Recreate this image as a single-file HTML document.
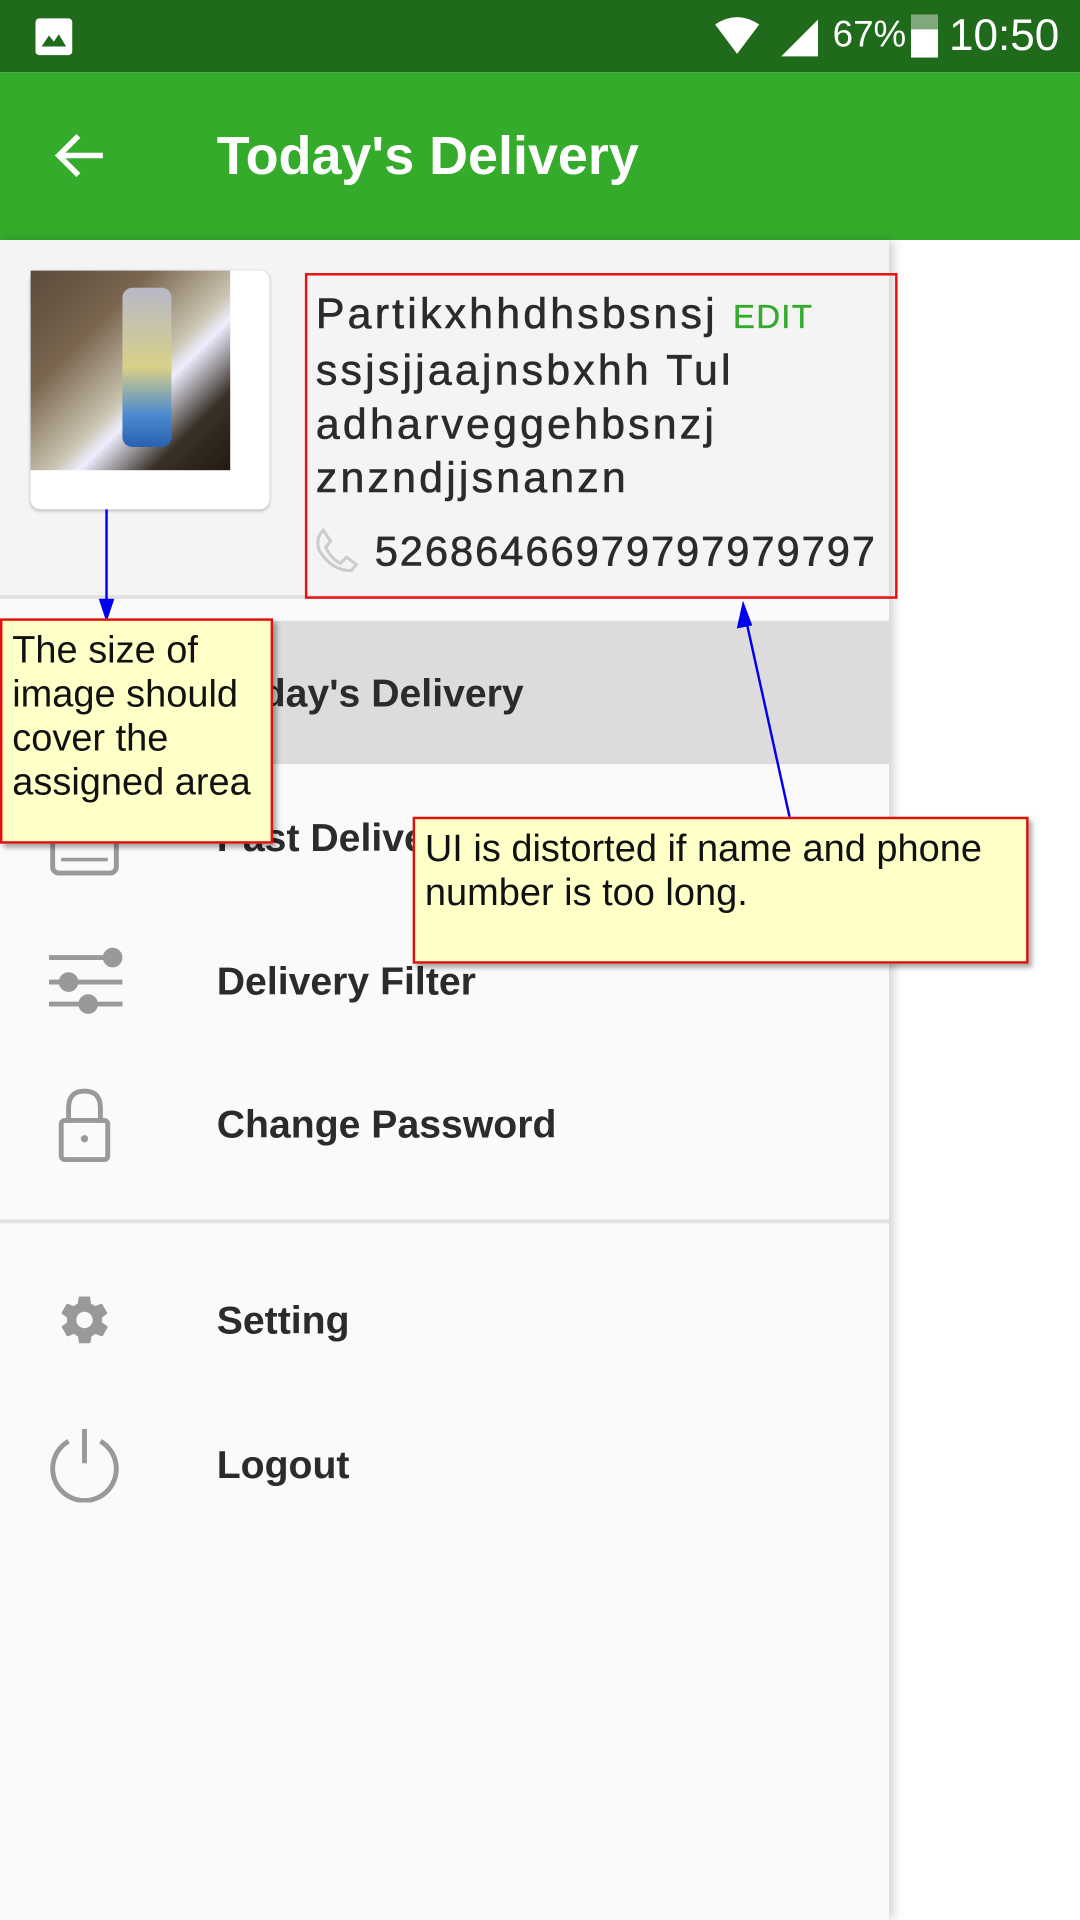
<!DOCTYPE html>
<html><head><meta charset="utf-8"><style>
html,body{margin:0;padding:0;width:1080px;height:1920px;overflow:hidden;background:#fff;font-family:"Liberation Sans",sans-serif}
#w{position:absolute;left:0;top:0;width:882px;height:1568px;transform:scale(1.22449);transform-origin:0 0;background:#fff}
.a{position:absolute}
.menu{position:absolute;left:177px;font-size:32px;font-weight:bold;color:#2b2b2b}
.note{position:absolute;background:#ffffc8;border:2px solid #e01010;box-shadow:3px 3px 4px rgba(0,0,0,.35);font-size:31px;color:#111;line-height:36px;padding:6px 8px;box-sizing:border-box}
</style></head><body><div id="w">
<div class="a" style="left:0;top:0;width:882px;height:59px;background:#1f6a1b"></div>
<svg class="a" style="left:28px;top:14px" width="32" height="32"><rect x="1" y="1" width="30" height="30" rx="3" fill="#fff"/><path d="M6 24 L12 15 L16 20 L20 14 L26 24Z" fill="#1f6a1b"/></svg>
<svg class="a" style="left:580px;top:10px" width="90" height="40"><path d="M4 10 Q22 -2 40 10 L22 34Z" fill="#fff"/><path d="M58 36 L88 6 L88 36Z" fill="#fff"/></svg>
<div class="a" style="left:680px;top:12px;font-size:30px;color:#fff">67%</div>
<div class="a" style="left:744px;top:12px;width:22px;height:35px;background:#fff"></div>
<div class="a" style="left:744px;top:12px;width:22px;height:12px;background:#7fa87c"></div>
<div class="a" style="left:775px;top:8px;font-size:36px;color:#fff">10:50</div>
<div class="a" style="left:0;top:59px;width:882px;height:137px;background:#35ab2b"></div>
<svg class="a" style="left:44px;top:106px" width="46" height="42"><path d="M40 21 H6 M20 5 L4 21 L20 37" stroke="#fff" stroke-width="4.5" fill="none"/></svg>
<div class="a" style="left:177px;top:103px;font-size:44px;font-weight:bold;color:#fff">Today's Delivery</div>
<div class="a" style="left:0;top:196px;width:726px;height:1372px;background:#fafafa;box-shadow:4px 0 8px rgba(0,0,0,.18)"></div>
<div class="a" style="left:0;top:196px;width:726px;height:292px;background:#f4f4f4"></div>
<div class="a" style="left:0;top:486px;width:726px;height:3px;background:#e2e2e2"></div>
<div class="a" style="left:25px;top:221px;width:195px;height:195px;background:#fff;border-radius:8px;box-shadow:0 1px 3px rgba(0,0,0,.25)"></div>
<div class="a" style="left:25px;top:221px;width:163px;height:163px;background:linear-gradient(135deg,#5a4a3a 0%,#7a6650 30%,#c9c3b0 55%,#eef 62%,#3a3228 80%,#221a12 100%)"></div>
<div class="a" style="left:100px;top:235px;width:40px;height:130px;background:linear-gradient(180deg,#b8b8c8,#d8d088 50%,#4a8ad0 80%,#2a60b0);border-radius:8px"></div>
<div class="a" style="left:249px;top:223px;width:484px;height:266px;border:2px solid #e81010;box-sizing:border-box"></div>
<div class="a" style="left:258px;top:235px;font-size:35px;line-height:44px;color:#2b2b2b;width:470px;letter-spacing:2.6px;-webkit-text-stroke:0.5px #2b2b2b">Partikxhhdhsbsnsj <span style="font-size:27px;color:#35ab2b;letter-spacing:1px;-webkit-text-stroke:0.3px #35ab2b">EDIT</span><br>ssjsjjaajnsbxhh Tul<br>adharveggehbsnzj<br>znzndjjsnanzn</div>
<svg class="a" style="left:256px;top:430px" width="38" height="38"><path d="M8 3 L14 12 L10 17 Q15 27 22 30 L27 25 L35 31 L31 36 Q15 36 5 20 Q1 10 8 3Z" fill="none" stroke="#ccc" stroke-width="2.5"/></svg>
<div class="a" style="left:306px;top:432px;width:407px;overflow:hidden;white-space:nowrap;font-size:34px;letter-spacing:1.6px;color:#2b2b2b;-webkit-text-stroke:0.5px #2b2b2b">52686466979797979797</div>
<div class="a" style="left:0;top:507px;width:726px;height:117px;background:#dcdcdc"></div>
<div class="menu" style="top:548px">Today's Delivery</div>
<svg class="a" style="left:40px;top:670px" width="58" height="46"><rect x="3" y="3" width="52" height="40" rx="5" fill="none" stroke="#999" stroke-width="4"/><path d="M10 32 H48" stroke="#999" stroke-width="3"/></svg>
<div class="menu" style="top:666px">Past Delivery</div>
<svg class="a" style="left:38px;top:770px" width="64" height="64"><g stroke="#999" stroke-width="4" fill="#999"><path d="M2 12 H56 M2 32 H62 M2 50 H62"/><circle cx="54" cy="12" r="6"/><circle cx="18" cy="32" r="6"/><circle cx="34" cy="50" r="6"/></g></svg>
<div class="menu" style="top:783px">Delivery Filter</div>
<svg class="a" style="left:46px;top:887px" width="46" height="64"><path d="M10 30 V18 Q10 4 23 4 Q36 4 36 18 V30" fill="none" stroke="#999" stroke-width="4"/><rect x="4" y="28" width="38" height="32" rx="3" fill="none" stroke="#999" stroke-width="4"/><circle cx="23" cy="43" r="3" fill="#999"/></svg>
<div class="menu" style="top:900px">Change Password</div>
<div class="a" style="left:0;top:996px;width:726px;height:3px;background:#e0e0e0"></div>
<svg class="a" style="left:46px;top:1055px" width="46" height="46" viewBox="0 0 24 24"><path fill="#999" d="M19.4 13c.04-.3.1-.7.1-1s-.03-.7-.1-1l2.1-1.6c.2-.15.25-.4.1-.6l-2-3.5c-.1-.2-.4-.3-.6-.2l-2.5 1c-.5-.4-1.1-.7-1.700-1l-.4-2.6C14.5 2.2 14.2 2 14 2h-4c-.25 0-.45.2-.5.4l-.4 2.7c-.6.25-1.200.6-1.700 1l-2.5-1c-.2-.1-.5 0-.6.2l-2 3.5c-.1.2-.05.45.1.6L4.6 11c-.05.3-.1.7-.1 1s.03.7.1 1l-2.1 1.6c-.2.15-.25.4-.1.6l2 3.5c.1.2.4.3.6.2l2.5-1c.5.4 1.100.7 1.700 1l.4 2.6c.05.25.25.4.5.4h4c.25 0 .45-.2.5-.4l.4-2.6c.6-.25 1.200-.6 1.700-1l2.5 1c.2.1.5 0 .6-.2l2-3.5c.1-.2.05-.45-.1-.6L19.4 13zM12 15.5c-1.900 0-3.5-1.600-3.5-3.5s1.600-3.5 3.5-3.5 3.5 1.600 3.5 3.5-1.600 3.5-3.5 3.5z"/></svg>
<div class="menu" style="top:1060px">Setting</div>
<svg class="a" style="left:38px;top:1163px" width="62" height="64"><path d="M18 14 A26 26 0 1 0 44 14" fill="none" stroke="#999" stroke-width="4"/><path d="M31 4 V32" stroke="#999" stroke-width="4"/></svg>
<div class="menu" style="top:1178px">Logout</div>
<svg class="a" style="left:0;top:0" width="882" height="700"><g stroke="#0000ee" stroke-width="2" fill="#0000ee"><path d="M87 416 V500" /><path d="M82 490 L87 505 L92 490Z"/><path d="M645 668 L609 505"/><path d="M603 512 L607 494 L613 510Z"/></g></svg>
<div class="note" style="left:0;top:505px;width:223px;height:184px">The size of image should cover the assigned area</div>
<div class="note" style="left:337px;top:667px;width:503px;height:120px">UI is distorted if name and phone number is too long.</div>
</div></body></html>
